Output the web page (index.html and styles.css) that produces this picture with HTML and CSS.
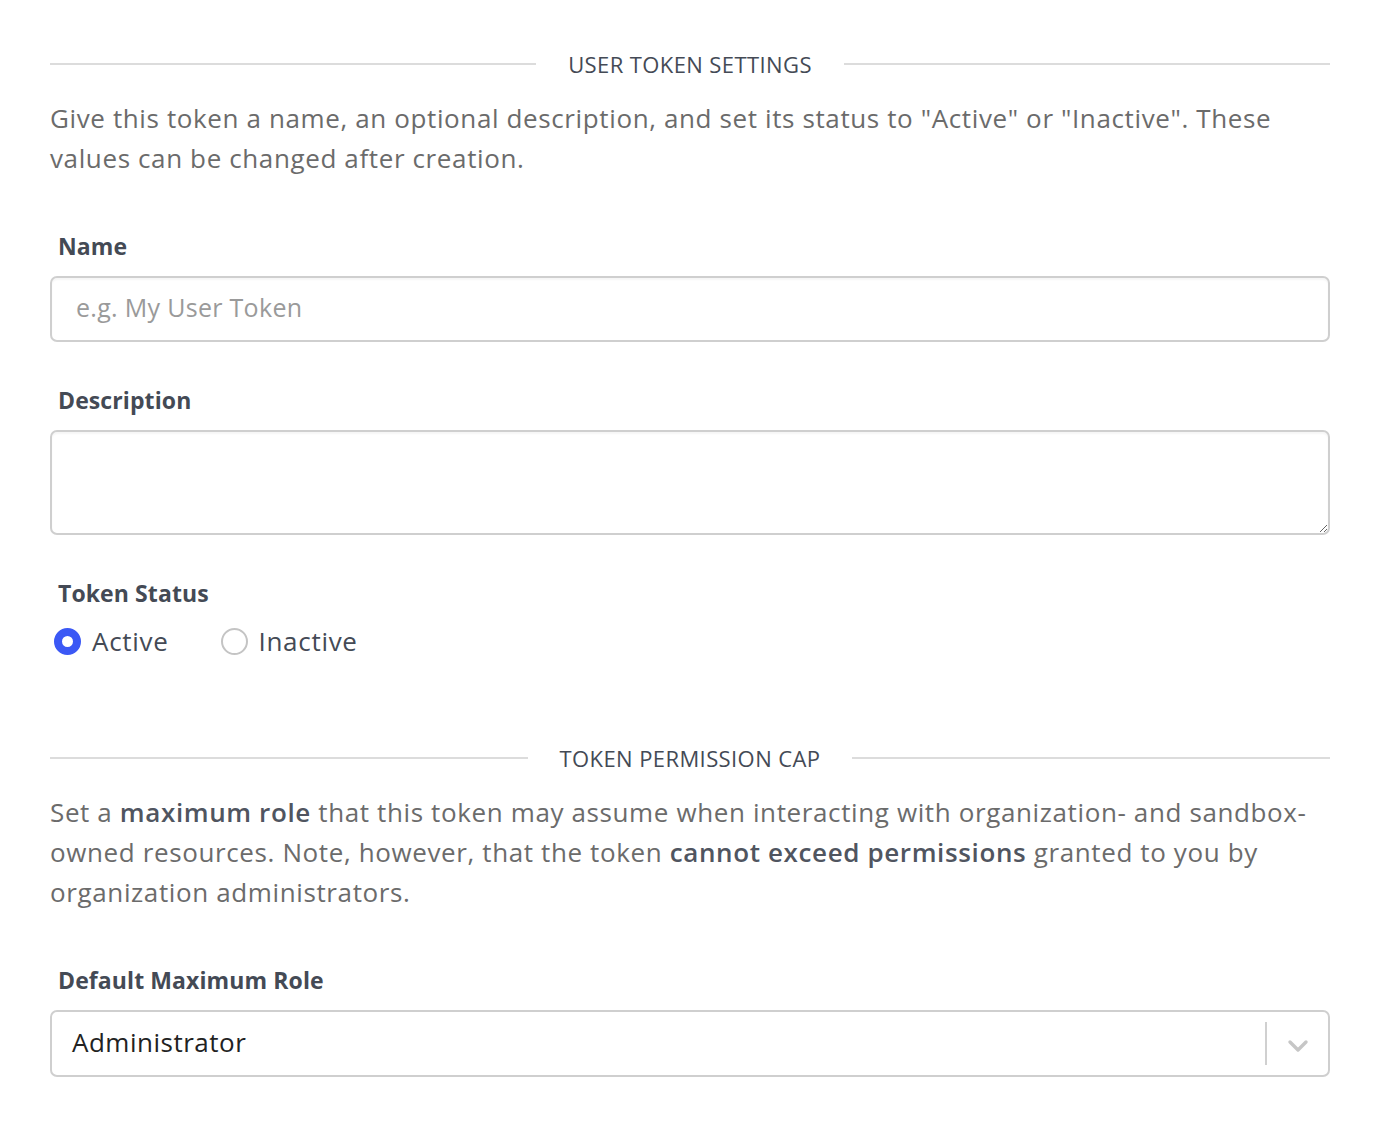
FILE: index.html
```html
<!DOCTYPE html>
<html lang="en">
<head>
<meta charset="utf-8">
<title>User Token Settings</title>
<link rel="stylesheet" href="styles.css">
</head>
<body>
<div class="page">
  <div class="section-head first"><span class="rule"></span><span class="section-title">USER TOKEN SETTINGS</span><span class="rule"></span></div>
  <p class="help">Give this token a name, an optional description, and set its status to "Active" or "Inactive". These values can be changed after creation.</p>

  <div class="field">
    <label class="label" for="name">Name</label>
    <input id="name" class="input" type="text" placeholder="e.g. My User Token">
  </div>

  <div class="field">
    <label class="label" for="desc">Description</label>
    <textarea id="desc" class="textarea"></textarea>
  </div>

  <div class="field">
    <div class="label">Token Status</div>
    <div class="radios">
      <label class="radio"><input type="radio" name="status" checked><span>Active</span></label>
      <label class="radio"><input type="radio" name="status"><span>Inactive</span></label>
    </div>
  </div>

  <div class="section-head second"><span class="rule"></span><span class="section-title">TOKEN PERMISSION CAP</span><span class="rule"></span></div>
  <p class="help">Set a <strong>maximum role</strong> that this token may assume when interacting with organization- and sandbox-owned resources. Note, however, that the token <strong>cannot exceed permissions</strong> granted to you by organization administrators.</p>

  <div class="field">
    <div class="label">Default Maximum Role</div>
    <div class="select">
      <span class="select-value">Administrator</span>
      <span class="select-sep"></span>
      <span class="select-arrow"><svg width="22" height="14" viewBox="0 0 22 14"><path d="M3 3 L11 11 L19 3" fill="none" stroke="#c6c6c6" stroke-width="3.4" stroke-linecap="round" stroke-linejoin="round"/></svg></span>
    </div>
  </div>
</div>
</body>
</html>
```
FILE: styles.css
```css
* { box-sizing: border-box; }
html, body { margin: 0; padding: 0; background: #fff; }
body {
  font-family: "Open Sans", "Noto Sans", sans-serif;
  color: #666;
}
.page {
  width: 1380px;
  padding: 49px 50px 40px;
}
.section-head {
  display: flex;
  align-items: center;
  gap: 32px;
  height: 30px;
}
.section-head.second { margin-top: 82px; }
.rule {
  flex: 1;
  height: 2px;
  background: #dcdcdc;
}
.section-title {
  font-size: 22px;
  line-height: 30px;
  color: #444a55;
  letter-spacing: 0.4px;
}
.help {
  margin: 19px 0 0;
  font-size: 26px;
  line-height: 40px;
  color: #6b6b6b;
  letter-spacing: 0.62px;
}
.help strong { color: #505560; font-weight: 600; }
.field { margin-top: 53px; }
.field + .field { margin-top: 43px; }
.label {
  display: block;
  margin: 0 0 15px 8px;
  font-size: 23px;
  line-height: 30px;
  font-weight: 700;
  color: #444a55;
  letter-spacing: 0.1px;
}
.input, .textarea {
  display: block;
  width: 100%;
  border: 2px solid #cfcfcf;
  border-radius: 7px;
  box-shadow: inset 0 2px 2px rgba(0,0,0,0.04);
  font-family: inherit;
  font-size: 25px;
  color: #444;
  background: #fff;
  outline: none;
}
.input {
  height: 66px;
  padding: 0 24px 5px;
  letter-spacing: 0.3px;
}
.input::placeholder { color: #9a9a9a; }
.textarea {
  height: 105px;
  padding: 14px 24px;
  resize: vertical;
}
.radios {
  display: flex;
  align-items: center;
  gap: 52px;
  height: 40px;
  margin-top: -2px;
  padding-left: 4px;
}
.radio {
  display: flex;
  align-items: center;
  gap: 11px;
  font-size: 26px;
  color: #444a55;
  letter-spacing: 0.7px;
}
.radio input {
  appearance: none;
  -webkit-appearance: none;
  margin: 0;
  width: 27px;
  height: 27px;
  border-radius: 50%;
  border: 2px solid #c4c4c4;
  background: #fff;
}
.radio input:checked {
  border: 8px solid #3b58f5;
}
.select {
  display: flex;
  align-items: center;
  height: 67px;
  border: 2px solid #cfcfcf;
  border-radius: 7px;
  padding: 0 0 0 20px;
}
.select-value {
  flex: 1;
  font-size: 26px;
  color: #222;
  letter-spacing: 0.5px;
  padding-bottom: 4px;
}
.select-sep {
  width: 2px;
  height: 43px;
  background: #d0d0d0;
}
.select-arrow {
  width: 61px;
  display: flex;
  justify-content: center;
  padding-top: 4px;
}
```
